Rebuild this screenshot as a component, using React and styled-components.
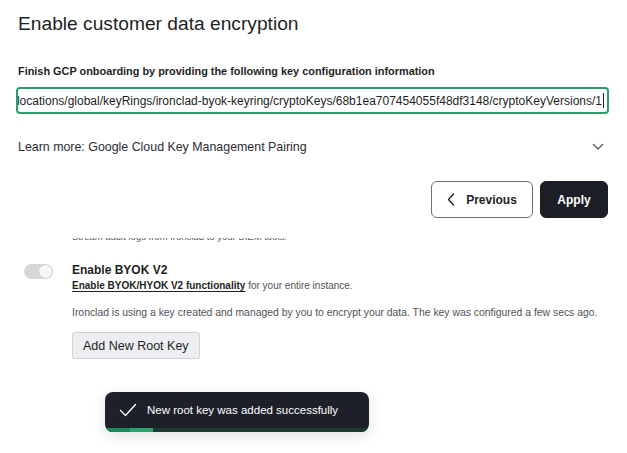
import React from 'react';
import styled, { createGlobalStyle } from 'styled-components';

const GlobalStyle = createGlobalStyle`
  html, body {
    margin: 0;
    padding: 0;
    background: #fff;
  }
  body {
    font-family: "Liberation Sans", Arial, sans-serif;
    color: #1d1f24;
    width: 627px;
    height: 453px;
    overflow: hidden;
  }
`;

const KEY_PATH =
  'projects/ironclad-prod/locations/global/keyRings/ironclad-byok-keyring/cryptoKeys/68b1ea707454055f48df3148/cryptoKeyVersions/1';

const App = () => {
  return (
    <>
      <GlobalStyle />
      <Modal>
        <Title>Enable customer data encryption</Title>
        <FieldLabel>Finish GCP onboarding by providing the following key configuration information</FieldLabel>
        <KeyInput>
          <KeyText>
            {KEY_PATH}
            <Caret />
          </KeyText>
        </KeyInput>
        <LearnMore>
          <span>Learn more: Google Cloud Key Management Pairing</span>
          <svg width="12" height="8" viewBox="0 0 12 8" fill="none">
            <path d="M1.5 1.5 L6 6 L10.5 1.5" stroke="#555a63" strokeWidth="1.4" strokeLinecap="round" strokeLinejoin="round" />
          </svg>
        </LearnMore>
        <Actions>
          <Button width={102}>
            <svg width="8" height="13" viewBox="0 0 8 13" fill="none">
              <path d="M6.5 1 L1.5 6.5 L6.5 12" stroke="#1d1f24" strokeWidth="1.4" strokeLinecap="round" strokeLinejoin="round" />
            </svg>
            Previous
          </Button>
          <Button primary width={68}>Apply</Button>
        </Actions>
      </Modal>

      <Page>
        <ClippedLine>
          <Muted>Stream audit logs from Ironclad to your SIEM tools.</Muted>
        </ClippedLine>
        <SettingRow>
          <Toggle>
            <Knob />
          </Toggle>
          <SettingBody>
            <SettingTitle>Enable BYOK V2</SettingTitle>
            <SettingDesc>
              <StrongLink>Enable BYOK/HYOK V2 functionality</StrongLink> for your entire instance.
            </SettingDesc>
            <Status>
              Ironclad is using a key created and managed by you to encrypt your data. The key was configured a few secs ago.
            </Status>
            <SecondaryButton>Add New Root Key</SecondaryButton>
          </SettingBody>
        </SettingRow>
        <ToastArea>
          <Toast>
            <ToastContent>
              <svg width="18" height="14" viewBox="0 0 18 14" fill="none">
                <path d="M1.5 7.5 L6.5 12.5 L16.5 1.5" stroke="#ffffff" strokeWidth="1.4" strokeLinecap="round" strokeLinejoin="round" />
              </svg>
              New root key was added successfully
            </ToastContent>
            <Progress>
              <ProgressFill style={{ width: '18%' }} />
            </Progress>
          </Toast>
        </ToastArea>
      </Page>
    </>
  );
};

const Modal = styled.div`
  height: 238px;
  padding: 11px 18px 0 18px;
  box-sizing: border-box;
  overflow: hidden;
`;

const Title = styled.h1`
  margin: 0;
  font-size: 19.2px;
  font-weight: 400;
  line-height: 26px;
  color: #1d1f24;
`;

const FieldLabel = styled.div`
  margin-top: 27px;
  font-size: 10.9px;
  font-weight: 700;
  line-height: 15px;
  color: #1d1f24;
`;

const KeyInput = styled.div`
  margin: 8px 0 0 -2px;
  width: 593px;
  height: 27px;
  box-sizing: border-box;
  border: 2px solid #2f9d6a;
  border-radius: 4px;
  display: flex;
  justify-content: flex-end;
  align-items: center;
  overflow: hidden;
  padding-right: 3px;
`;

const KeyText = styled.span`
  white-space: nowrap;
  font-size: 12px;
  color: #1d1f24;
  display: flex;
  align-items: center;
`;

const Caret = styled.span`
  display: inline-block;
  width: 1px;
  height: 15px;
  background: #1d1f24;
  margin-left: 1px;
`;

const LearnMore = styled.div`
  margin-top: 24px;
  display: flex;
  justify-content: space-between;
  align-items: center;
  font-size: 12.4px;
  line-height: 18px;
  color: #2b2d33;
  padding-right: 5px;
`;

const Actions = styled.div`
  margin-top: 25px;
  display: flex;
  justify-content: flex-end;
  gap: 7px;
  padding-right: 1px;
`;

const Button = styled.button`
  width: ${p => p.width}px;
  height: 37px;
  padding: 0;
  display: flex;
  justify-content: center;
  align-items: center;
  gap: 11px;
  font-family: inherit;
  font-size: 12px;
  font-weight: 700;
  border-radius: 6px;
  border: 1px solid ${p => (p.primary ? '#1c1e26' : '#6d6f75')};
  background: ${p => (p.primary ? '#1c1e26' : '#fff')};
  color: ${p => (p.primary ? '#fff' : '#1d1f24')};
  cursor: pointer;
`;

const Page = styled.div`
  padding: 0 0 0 24px;
`;

const ClippedLine = styled.div`
  height: 6px;
  overflow: hidden;
  display: flex;
  align-items: flex-end;
  padding-left: 48px;
`;

const Muted = styled.span`
  font-size: 9.5px;
  line-height: 14px;
  color: #5a5d63;
  white-space: nowrap;
`;

const SettingRow = styled.div`
  margin-top: 18px;
  display: flex;
  gap: 19px;
`;

const Toggle = styled.div`
  width: 29px;
  height: 15px;
  margin-top: 2px;
  border-radius: 8px;
  background: #d6d7db;
  display: flex;
  justify-content: flex-end;
  align-items: center;
  padding: 0 1px;
  box-sizing: border-box;
  flex-shrink: 0;
`;

const Knob = styled.div`
  width: 13px;
  height: 13px;
  border-radius: 50%;
  background: #f7f7f8;
  box-shadow: 0 0 0 0.5px #c9cacd;
`;

const SettingBody = styled.div`
  display: flex;
  flex-direction: column;
  align-items: flex-start;
`;

const SettingTitle = styled.div`
  font-size: 12px;
  font-weight: 700;
  line-height: 17px;
  color: #1d1f24;
`;

const SettingDesc = styled.div`
  font-size: 10px;
  line-height: 14px;
  color: #4f5258;
`;

const StrongLink = styled.a`
  font-weight: 700;
  color: #1d1f24;
  text-decoration: underline;
  text-underline-offset: 2px;
`;

const Status = styled.div`
  margin-top: 13px;
  font-size: 10.4px;
  line-height: 14px;
  color: #4f5258;
  white-space: nowrap;
`;

const SecondaryButton = styled.button`
  margin-top: 12px;
  height: 27px;
  padding: 0 10px;
  font-family: inherit;
  font-size: 12.5px;
  color: #1d1f24;
  background: #eceef2;
  border: 1px solid #cfd1d6;
  border-radius: 3px;
`;

const ToastArea = styled.div`
  margin-top: 33px;
  padding-left: 81px;
`;

const Toast = styled.div`
  width: 264px;
  height: 40px;
  border-radius: 8px;
  background: #1e2029;
  overflow: hidden;
  display: flex;
  flex-direction: column;
  box-shadow: 0 4px 14px rgba(0, 0, 0, 0.12);
`;

const ToastContent = styled.div`
  flex: 1;
  display: flex;
  align-items: center;
  gap: 10px;
  padding-left: 14px;
  font-size: 11.5px;
  color: #fff;
`;

const Progress = styled.div`
  height: 4px;
  background: #1c3b33;
`;

const ProgressFill = styled.div`
  height: 100%;
  background: linear-gradient(to right, #1b8a5a 0 52%, #28a46c 52% 100%);
`;

export default App;
